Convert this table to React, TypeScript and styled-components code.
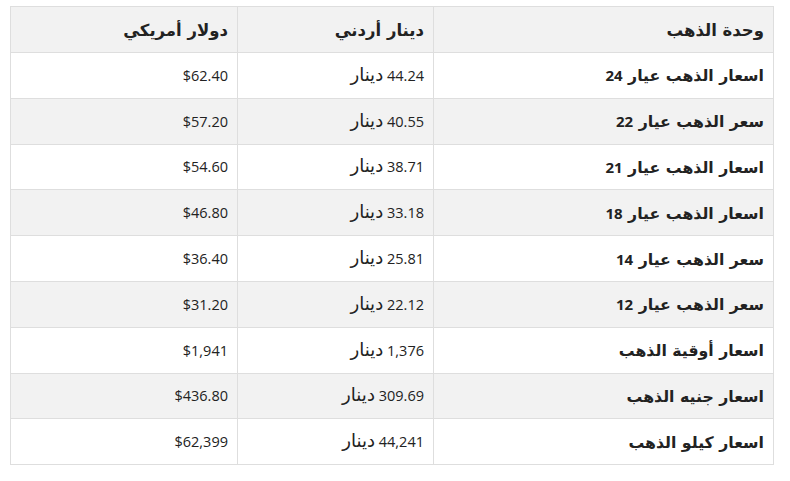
import React from "react";
import styled, { createGlobalStyle } from "styled-components";

const Global = createGlobalStyle`
  html, body { margin: 0; padding: 0; background: #fff; }
  body { font-family: "Open Sans", "DejaVu Sans", sans-serif; }
  *, *::before, *::after { box-sizing: border-box; }
`;

const Page = styled.div`
  padding: 6px 0 0 10px;
  width: 773px;
`;

const Table = styled.table`
  direction: rtl;
  width: 763px;
  border-collapse: collapse;
  table-layout: fixed;
  color: #222;
`;

const Th = styled.th<{ $w: number }>`
  width: ${(p) => p.$w}px;
  height: 46px;
  padding: 0 9px;
  text-align: right;
  font-size: 15px;
  font-weight: 700;
  background: #f2f2f2;
  border: 1px solid #dedede;
`;

const Row = styled.tr<{ $alt: boolean }>`
  background: ${(p) => (p.$alt ? "#f2f2f2" : "#fff")};
`;

const Td = styled.td<{ $bold?: boolean }>`
  height: 45.8px;
  padding: 0 9px;
  text-align: right;
  font-size: ${(p) => (p.$bold ? "15px" : "14.5px")};
  font-weight: ${(p) => (p.$bold ? 700 : 400)};
  border: 1px solid #dedede;
`;

const Ar = styled.span<{ $scale: number }>`
  font-family: "DejaVu Sans", sans-serif;
  font-size: ${(p) => p.$scale}em;
  line-height: 1;
`;

function Mixed({ text, scale }: { text: string; scale: number }) {
  const parts = text.split(/([\u0600-\u06FF][\u0600-\u06FF ]*)/);
  return (
    <>
      {parts.map((p, i) =>
        /[\u0600-\u06FF]/.test(p) ? (
          <Ar key={i} $scale={scale}>
            {p}
          </Ar>
        ) : (
          <React.Fragment key={i}>{p}</React.Fragment>
        )
      )}
    </>
  );
}

const rows = [
  ["اسعار الذهب عيار 24", "44.24 دينار", "$62.40"],
  ["سعر الذهب عيار 22", "40.55 دينار", "$57.20"],
  ["اسعار الذهب عيار 21", "38.71 دينار", "$54.60"],
  ["اسعار الذهب عيار 18", "33.18 دينار", "$46.80"],
  ["سعر الذهب عيار 14", "25.81 دينار", "$36.40"],
  ["سعر الذهب عيار 12", "22.12 دينار", "$31.20"],
  ["اسعار أوقية الذهب", "1,376 دينار", "$1,941"],
  ["اسعار جنيه الذهب", "309.69 دينار", "$436.80"],
  ["اسعار كيلو الذهب", "44,241 دينار", "$62,399"],
];

export default function App() {
  return (
    <Page>
      <Global />
      <Table>
        <thead>
          <tr>
            <Th $w={340}>
              <Mixed text="وحدة الذهب" scale={1.1} />
            </Th>
            <Th $w={196}>
              <Mixed text="دينار أردني" scale={1.1} />
            </Th>
            <Th $w={227}>
              <Mixed text="دولار أمريكي" scale={1.1} />
            </Th>
          </tr>
        </thead>
        <tbody>
          {rows.map((r, i) => (
            <Row key={i} $alt={i % 2 === 1}>
              <Td $bold>
                <Mixed text={r[0]} scale={1.05} />
              </Td>
              <Td>
                <Mixed text={r[1]} scale={1.25} />
              </Td>
              <Td>
                <bdi>{r[2]}</bdi>
              </Td>
            </Row>
          ))}
        </tbody>
      </Table>
    </Page>
  );
}
